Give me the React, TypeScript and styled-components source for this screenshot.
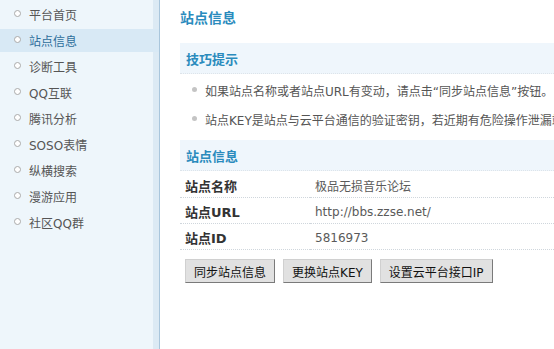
import { JSX, Fragment } from 'react';
import styled, { createGlobalStyle } from 'styled-components';

const GlobalStyle = createGlobalStyle`
  html, body {
    margin: 0;
    padding: 0;
    background: #fff;
    overflow: hidden;
  }
  body {
    font-family: "DejaVu Sans", "Noto Sans CJK SC", sans-serif;
    font-size: 12px;
    color: #555;
  }
`;

const Page = styled.div`
  display: flex;
  width: 554px;
  height: 349px;
`;

const Sidebar = styled.ul`
  flex: 0 0 159px;
  margin: 0;
  padding: 3px 0 0;
  list-style: none;
  border-right: 1px solid #a9c6dc;
  background: linear-gradient(to right, #eef6fb 153px, #dceaf4 153px);
`;

const NavItem = styled.li<{ $active?: boolean }>`
  display: flex;
  align-items: center;
  gap: 8px;
  height: 23px;
  margin-bottom: 3px;
  padding-left: 14px;
  font-size: 12px;
  color: ${(p) => (p.$active ? '#2d6e9b' : '#555')};
  background: ${(p) => (p.$active ? '#d8e9f5' : 'transparent')};
  &::before {
    content: '';
    width: 5px;
    height: 5px;
    border: 1px solid #aaa;
    border-radius: 50%;
    background: #fff;
    margin-top: -2px;
  }
`;

const Main = styled.div`
  flex: 1;
  min-width: 0;
  padding: 8px 0 0 20px;
  white-space: nowrap;
  overflow: hidden;
`;

const Title = styled.h1`
  margin: 0 0 15px;
  font-size: 14px;
  line-height: 20px;
  font-weight: bold;
  color: #2a8bbd;
`;

const SectionHead = styled.div`
  height: 30px;
  padding-left: 6px;
  display: flex;
  align-items: center;
  background: #eff6fc;
  border-bottom: 1px dotted #dde4ea;
  font-size: 13px;
  font-weight: bold;
  color: #2a8bbd;
`;

const Tips = styled.ul`
  margin: 0;
  padding: 2px 0 6px 12px;
  list-style: none;
`;

const Tip = styled.li`
  display: flex;
  align-items: center;
  gap: 8px;
  height: 29px;
  color: #555;
  &::before {
    content: '';
    width: 5px;
    height: 5px;
    border-radius: 50%;
    background: #c4c4c4;
    margin-top: -3px;
    flex: none;
  }
`;

const Table = styled.div`
  display: grid;
  grid-template-columns: 130px 1fr;
  margin-top: 1px;
`;

const Cell = styled.div<{ $label?: boolean }>`
  height: 26px;
  display: flex;
  align-items: center;
  padding: 2px 0 0 5px;
  box-sizing: border-box;
  border-bottom: 1px dotted #cfd6dc;
  font-size: ${(p) => (p.$label ? '13px' : '12px')};
  font-weight: ${(p) => (p.$label ? 'bold' : 'normal')};
  color: ${(p) => (p.$label ? '#333' : '#5a5a5a')};
`;

const Actions = styled.div`
  display: flex;
  gap: 8px;
  padding: 9px 0 0 5px;
`;

const Button = styled.button`
  height: 24px;
  padding: 0 8px;
  font-family: "DejaVu Sans", "Noto Sans CJK SC", sans-serif;
  font-size: 12px;
  color: #111;
  background: #e1e1e1;
  border: 1px solid;
  border-color: #d0d0d0 #7a7a7a #7a7a7a #d0d0d0;
  border-radius: 0;
`;

const navItems = ['平台首页', '站点信息', '诊断工具', 'QQ互联', '腾讯分析', 'SOSO表情', '纵横搜索', '漫游应用', '社区QQ群'];

const siteRows: [string, string][] = [
  ['站点名称', '极品无损音乐论坛'],
  ['站点URL', 'http://bbs.zzse.net/'],
  ['站点ID', '5816973'],
];

export default function App(): JSX.Element {
  return (
    <Page>
      <GlobalStyle />
      <Sidebar>
        {navItems.map((item) => (
          <NavItem key={item} $active={item === '站点信息'}>
            {item}
          </NavItem>
        ))}
      </Sidebar>
      <Main>
        <Title>站点信息</Title>
        <SectionHead>技巧提示</SectionHead>
        <Tips>
          <Tip>如果站点名称或者站点URL有变动，请点击“同步站点信息”按钮。</Tip>
          <Tip>站点KEY是站点与云平台通信的验证密钥，若近期有危险操作泄漏站点KEY等信息，请点击“更换站点KEY”按钮。</Tip>
        </Tips>
        <SectionHead>站点信息</SectionHead>
        <Table>
          {siteRows.map(([label, value]) => (
            <Fragment key={label}>
              <Cell $label>{label}</Cell>
              <Cell>{value}</Cell>
            </Fragment>
          ))}
        </Table>
        <Actions>
          <Button>同步站点信息</Button>
          <Button>更换站点KEY</Button>
          <Button>设置云平台接口IP</Button>
        </Actions>
      </Main>
    </Page>
  );
}
